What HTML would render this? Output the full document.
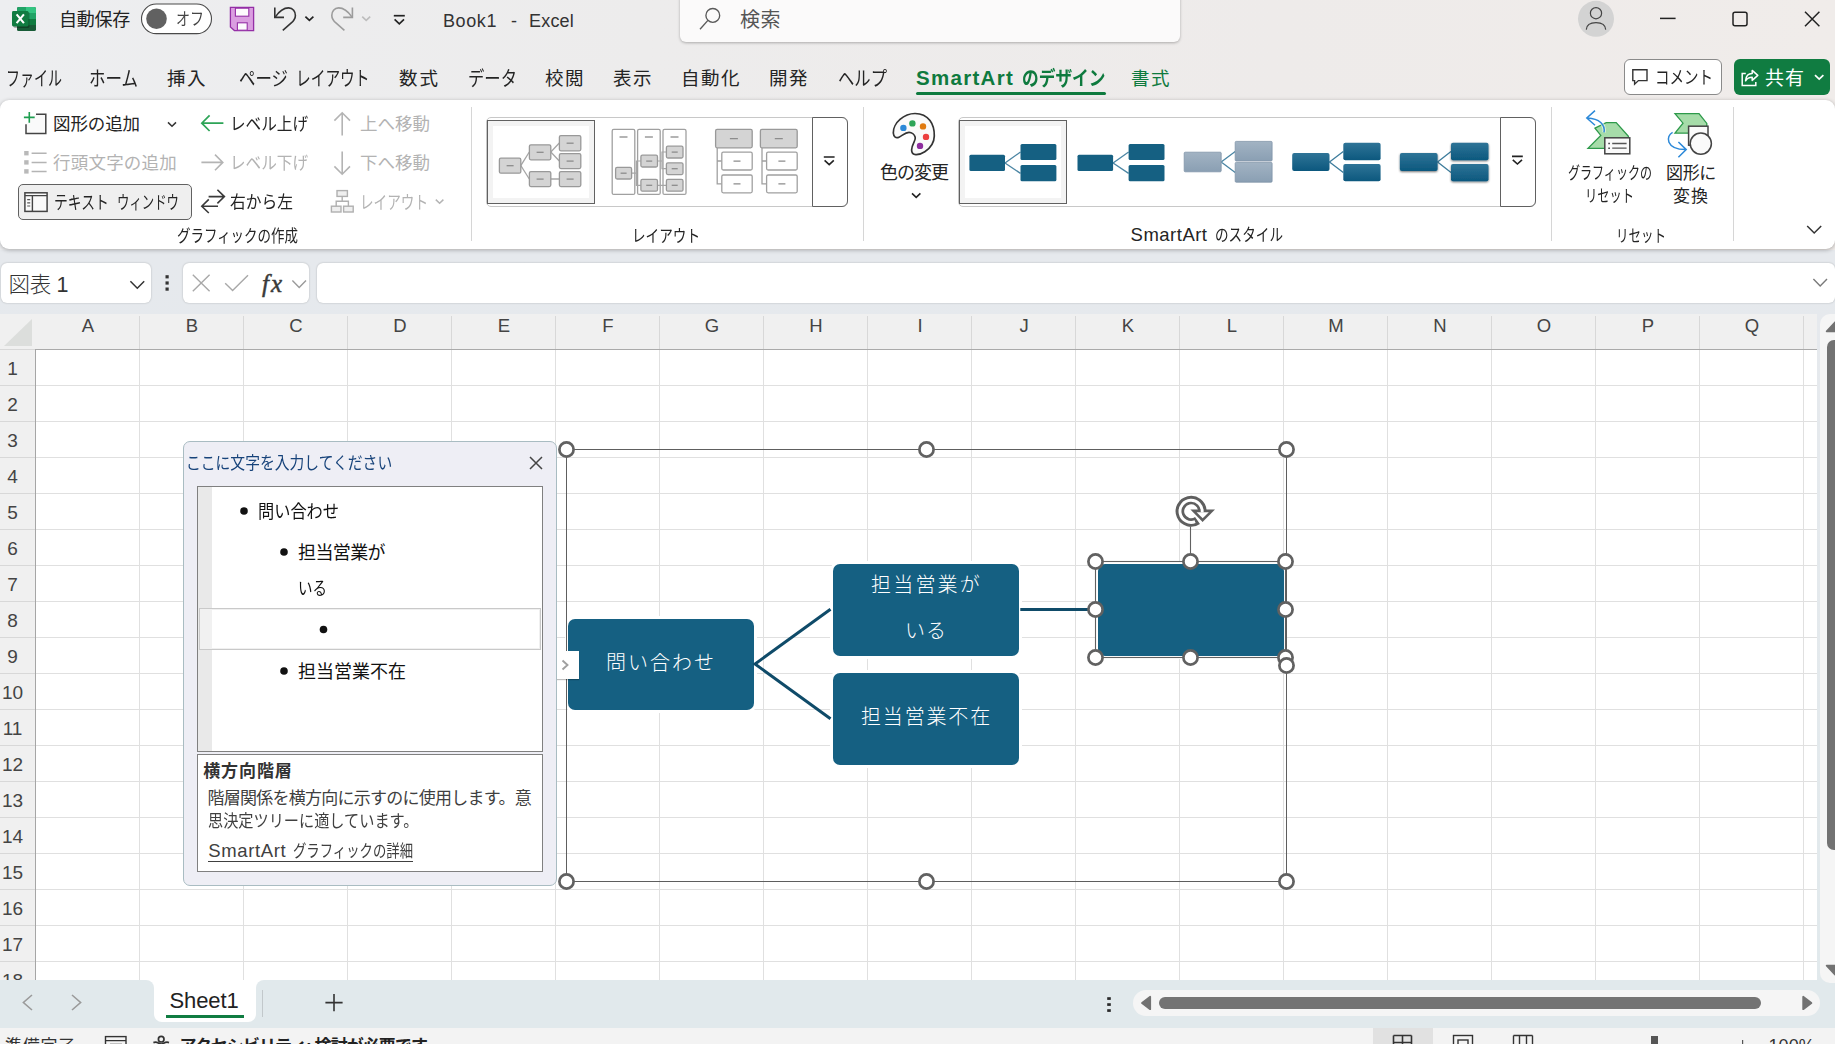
<!DOCTYPE html>
<html lang="ja"><head><meta charset="utf-8"><title>Book1 - Excel</title>
<style>

*{box-sizing:border-box;margin:0;padding:0}
html,body{width:1835px;height:1044px;overflow:hidden}
body{position:relative;background:linear-gradient(to right,#edeef0 0,#edecec 35%,#eeebea 70%,#f0ecea 100%);font-family:"Liberation Sans","Noto Sans CJK JP",sans-serif;}
.t{position:absolute;white-space:nowrap;}
.z{z-index:6}
.a{position:absolute}
svg{position:absolute;overflow:visible}
.sep{position:absolute;width:1px;background:#d6d6d6;top:107px;height:134px}
.hd{position:absolute;width:17px;height:17px;border-radius:50%;border:2.8px solid #666;background:#fff;}
.bx{position:absolute;background:#156082;border-radius:7px;box-shadow:0 0 0 3px #fff}

</style></head><body>

<!-- ===== title bar ===== -->
<div class="a" style="left:680px;top:-8px;width:500px;height:50px;background:#fbfafa;border-radius:6px;box-shadow:0 1px 3px rgba(0,0,0,.28)"></div>
<!-- ===== ribbon ===== -->
<div class="a" style="left:0;top:250px;width:1835px;height:800px;background:linear-gradient(#e6e9ed,#e1e9ec)"></div>
<div class="a" style="left:0;top:100px;width:1835px;height:149px;background:#fff;border-radius:9px;box-shadow:0 1px 4px rgba(0,0,0,.30)"></div>
<div class="sep" style="left:471px"></div>
<div class="sep" style="left:863px"></div>
<div class="sep" style="left:1551px"></div>
<div class="sep" style="left:1733px"></div>
<!-- text window button -->
<div class="a" style="left:18px;top:184px;width:174px;height:36px;border:1px solid #616161;border-radius:5px;background:#efefef"></div>
<!-- layout gallery -->
<div class="a" style="left:486px;top:117px;width:362px;height:90px;border:1px solid #c8c8c8;border-radius:5px;background:#fff"></div>
<div class="a" style="left:812px;top:117px;width:36.4px;height:90px;border:1px solid #616161;border-radius:0 6px 6px 0;background:#fff"></div>
<div class="a" style="left:487px;top:120px;width:108px;height:84px;border:1px solid #616161;background:#f3f3f3"></div>
<!-- style gallery -->
<div class="a" style="left:958px;top:117px;width:578px;height:90px;border:1px solid #c8c8c8;border-radius:5px;background:#fff"></div>
<div class="a" style="left:1500px;top:117px;width:36px;height:90px;border:1px solid #616161;border-radius:0 6px 6px 0;background:#fff"></div>
<div class="a" style="left:959px;top:120px;width:108px;height:84px;border:1px solid #616161;background:#f3f3f3"></div>
<!-- comment / share -->
<div class="a" style="left:1624px;top:59.4px;width:98px;height:35.4px;border:1px solid #8a8a8a;border-radius:6px;background:#fff"></div>
<div class="a" style="left:1734px;top:59.4px;width:96px;height:35.4px;border-radius:6px;background:#107c41"></div>
<!-- tab underline -->
<div class="a" style="left:916px;top:92px;width:190px;height:3px;background:#0e7a3e;border-radius:1.5px"></div>
<!-- ===== formula bar ===== -->
<div class="a" style="left:1px;top:263px;width:150px;height:40px;background:#fff;border-radius:6px;box-shadow:0 0 2px rgba(0,0,0,.25)"></div>
<div class="a" style="left:183px;top:263px;width:126px;height:40px;background:#fff;border-radius:6px;box-shadow:0 0 2px rgba(0,0,0,.25)"></div>
<div class="a" style="left:317px;top:263px;width:1518px;height:40px;background:#fff;border-radius:6px;box-shadow:0 0 2px rgba(0,0,0,.25)"></div>
<!-- ===== grid ===== -->
<div class="a" style="left:0;top:314px;width:1817px;height:666px;background:#fff"></div>
<div class="a" style="left:36px;top:349px;width:1781px;height:631px;background-image:linear-gradient(to right,transparent 103px,#e0e0e0 103px),linear-gradient(to bottom,transparent 35px,#e0e0e0 35px);background-size:104px 100%,100% 36px;background-position:0 0,0 1px"></div>
<div class="a" style="left:0;top:314px;width:1817px;height:36px;background:#f0f0f0;border-bottom:1px solid #aaa"></div>
<div class="a" style="left:0;top:349px;width:36px;height:631px;background:#f0f0f0;border-right:1px solid #a6a6a6"></div>
<div class="a" id="colsep" style="left:36px;top:316px;width:1781px;height:33px;background-image:linear-gradient(to right,transparent 103px,#d8d8d8 103px);background-size:104px 100%"></div>
<div class="a" id="rowsep" style="left:0;top:349px;width:35px;height:631px;background-image:linear-gradient(to bottom,transparent 35px,#d8d8d8 35px);background-size:100% 36px;background-position:0 1px"></div>
<svg style="left:0;top:314px" width="36" height="35"><polygon points="4,32 32,32 32,5" fill="#dcdedc"/></svg>
<!-- vertical scrollbar -->
<div class="a" style="left:1817.5px;top:314px;width:18px;height:670px;background:linear-gradient(#e6e9ed,#e1e9ec);z-index:6"></div>
<div class="a" style="left:1820px;top:314px;width:30px;height:669px;background:#f5f5f5;border-radius:10px;z-index:6"></div>
<div class="a" style="left:1827px;top:340px;width:14px;height:510px;background:#727272;border-radius:7px;z-index:6"></div>
<svg style="left:1817px;top:314px;z-index:6" width="18" height="670"><path d="M9.6 17.4L18 8.2V17.4Z" fill="#727272" stroke="#727272" stroke-width="1.6" stroke-linejoin="round"/><path d="M9.6 651.6H18V660.6Z" fill="#727272" stroke="#727272" stroke-width="1.6" stroke-linejoin="round"/></svg>
<!-- ===== sheet tab bar ===== -->
<div class="a" style="left:0;top:980px;width:1835px;height:64px;background:#fff;z-index:5"></div>
<div class="a" style="left:140px;top:1000px;width:130px;height:28px;background:#e1e9ec;z-index:5"></div>
<div class="a" style="left:0;top:980px;width:153.5px;height:48px;background:#e1e9ec;border-top-right-radius:8px;z-index:5"></div>
<div class="a" style="left:256px;top:980px;width:1579px;height:48px;background:#e1e9ec;border-top-left-radius:8px;z-index:5"></div>
<div class="a" style="left:153.5px;top:980px;width:102.5px;height:41.5px;background:#fff;border-radius:0 0 8px 8px;z-index:5"></div>
<div class="a" style="left:166px;top:1015px;width:78px;height:3px;background:#107c41;z-index:5"></div>
<div class="a" style="left:262px;top:990px;width:1px;height:27px;background:#c2c8cb;z-index:5"></div>
<div class="a" style="left:1132.8px;top:989.8px;width:687.2px;height:26.2px;background:#f5f5f5;border-radius:13.1px;z-index:5"></div>
<div class="a" style="left:1159px;top:997px;width:602.2px;height:12px;background:#737373;border-radius:6px;z-index:5"></div>
<svg style="left:0;top:981px;z-index:5" width="1835" height="46">
 <polyline points="32,14 23.4,21.5 32,29" fill="none" stroke="#9a9a9a" stroke-width="1.6"/>
 <polyline points="72,14 80.6,21.5 72,29" fill="none" stroke="#9a9a9a" stroke-width="1.6"/>
 <path d="M325.4 21.6h17.2M334 13v17.2" stroke="#333" stroke-width="1.6"/>
 <g fill="#2a2a2a"><rect x="1107.2" y="16.2" width="3.6" height="2.7"/><rect x="1107.2" y="22.2" width="3.6" height="2.7"/><rect x="1107.2" y="28.2" width="3.6" height="2.7"/></g>
 <path d="M1142 22L1150.2 15.8V28.2Z" fill="#727272" stroke="#727272" stroke-width="1.8" stroke-linejoin="round"/>
 <path d="M1811.4 22L1803.2 15.8V28.2Z" fill="#727272" stroke="#727272" stroke-width="1.8" stroke-linejoin="round"/>
</svg>
<!-- ===== status bar ===== -->
<div class="a" style="left:0;top:1028px;width:1835px;height:17px;background:#f3f3f3;z-index:5"></div>
<div class="a" style="left:1373px;top:1028px;width:60px;height:17px;background:#e1e1e1;z-index:5"></div>


<!-- ===== title bar icons ===== -->
<svg style="left:0;top:0" width="1835" height="100">
 <!-- excel logo -->
 <g>
  <rect x="17" y="7" width="19" height="24" rx="1.6" fill="#185c37"/>
  <path d="M18.6 7H26V13H17V8.6A1.6 1.6 0 0 1 18.6 7Z" fill="#21a366"/>
  <path d="M26 7H34.4A1.6 1.6 0 0 1 36 8.6V13H26Z" fill="#33c481"/>
  <rect x="17" y="13" width="9" height="6" fill="#107c41"/>
  <rect x="26" y="13" width="10" height="6" fill="#21a366"/>
  <rect x="17" y="19" width="9" height="6" fill="#185c37"/>
  <rect x="26" y="19" width="10" height="6" fill="#107c41"/>
  <rect x="13.5" y="12" width="16" height="16" rx="1.4" fill="#000" opacity=".28"/>
  <rect x="12" y="11" width="16.5" height="15.5" rx="1.4" fill="#107c41"/>
  <path d="M16.6 14.4L23.9 23.2M23.9 14.4L16.6 23.2" stroke="#fff" stroke-width="2.1" fill="none"/>
 </g>
 <!-- autosave toggle -->
 <rect x="141.5" y="4" width="70" height="29.6" rx="14.8" fill="#fff" stroke="#4a4a4a" stroke-width="1.1"/>
 <circle cx="156.5" cy="18.7" r="10.3" fill="#616161"/>
 <!-- save -->
 <path d="M230.4 7.4H253.6V30.6H234.4L230.4 27Z" fill="#da9ee0" stroke="#952fa6" stroke-width="1.3" stroke-linejoin="miter"/>
 <rect x="235.4" y="8.2" width="13.4" height="8" fill="#fdfafd" stroke="#952fa6" stroke-width="1.1"/>
 <rect x="237.4" y="22.8" width="9.8" height="7.4" fill="#fdfafd" stroke="#952fa6" stroke-width="1.1"/>
 <!-- undo -->
 <g fill="none" stroke="#333" stroke-width="1.6">
  <path d="M274.8 7.6V17.4H284"/>
  <path d="M275.2 17.1C279 11.5 284 7.9 288.6 7.9C293 7.9 295.4 11.5 295.4 15.4C295.4 19 293.5 21 291 23.2L282.8 30.4"/>
  <path d="M305.4 16.6L309.4 20.4L313.4 16.6" stroke="#222" stroke-width="1.7"/>
 </g>
 <!-- redo -->
 <g fill="none" stroke="#9c9c9c" stroke-width="1.6">
  <path d="M352.4 7.6V17.4H343.2"/>
  <path d="M352 17.1C348.2 11.5 343.2 7.9 338.6 7.9C334.2 7.9 331.8 11.5 331.8 15.4C331.8 19 333.7 21 336.2 23.2L344.4 30.4"/>
  <path d="M362.2 16.6L366.2 20.4L370.2 16.6" stroke="#bdbdbd" stroke-width="1.6"/>
 </g>
 <!-- customize QAT -->
 <g fill="none" stroke="#222" stroke-width="1.7">
  <path d="M393.8 15.7H404.8"/><path d="M394.6 19.4L399.3 23.8L404 19.4"/>
 </g>
 <!-- search icon -->
 <g fill="none" stroke="#5a5a5a" stroke-width="1.35">
  <circle cx="712.8" cy="15.4" r="6.9"/><path d="M707.9 20.4L700 29.2"/>
 </g>
 <!-- avatar -->
 <circle cx="1596" cy="18.8" r="18" fill="#d3d3d3"/>
 <g fill="none" stroke="#444" stroke-width="1.2">
  <circle cx="1596" cy="13.2" r="5.6"/>
  <path d="M1586.3 29.6C1586.6 24.6 1590.8 22.6 1596 22.6C1601.2 22.6 1605.4 24.6 1605.7 29.6"/>
 </g>
 <!-- window controls -->
 <g fill="none" stroke="#222" stroke-width="1.5">
  <path d="M1660 18.4H1675.6"/>
  <rect x="1733" y="12.2" width="14" height="13.6" rx="2"/>
  <path d="M1805 11.8L1819.4 26.2M1819.4 11.8L1805 26.2"/>
 </g>
 <!-- comment icon -->
 <path d="M1632.8 69.8H1647V80.6H1638.4L1634.6 84.2V80.6H1632.8Z" fill="none" stroke="#333" stroke-width="1.4" stroke-linejoin="miter"/>
 <!-- share icon -->
 <g fill="none" stroke="#fff" stroke-width="1.5">
  <path d="M1745.8 73.4H1742.2V85.6H1755.8V82"/>
  <path d="M1745.6 80.8C1745.9 76 1748.6 73.6 1752.2 73.6V70.4L1757.8 75.4L1752.2 80.4V77.2C1749.6 77.2 1747.2 78 1745.6 80.8Z" stroke-linejoin="round"/>
  <path d="M1815 75.2L1819.2 79.2L1823.4 75.2" stroke-width="1.7"/>
 </g>
</svg>
<!-- ===== ribbon group 1 icons ===== -->
<svg style="left:0;top:100px" width="480" height="150" viewBox="0 100 480 150">
 <!-- add shape -->
 <path d="M36 114.2H45.8V133.6H26V124.2" fill="#fafafa" stroke="#444" stroke-width="1.5"/>
 <path d="M23.9 117.4H34.7M29.3 112V122.8" stroke="#1e9e50" stroke-width="1.6" fill="none"/>
 <path d="M168 122.4L172 126.2L176 122.4" fill="none" stroke="#333" stroke-width="1.5"/>
 <!-- promote (green left arrow) -->
 <path d="M223.4 123.2H202M209.6 115.4L201.8 123.2L209.6 131" fill="none" stroke="#2da457" stroke-width="1.7"/>
 <!-- up arrow gray -->
 <path d="M342.2 135.6V113M334.4 120.6L342.2 112.8L350 120.6" fill="none" stroke="#b4b4b4" stroke-width="1.6"/>
 <!-- bullets gray -->
 <g fill="#b9b9b9"><rect x="24.2" y="151" width="4.4" height="4.4"/><rect x="24.2" y="160.2" width="4.4" height="4.4"/><rect x="24.2" y="169.2" width="4.4" height="4.4"/></g>
 <path d="M31.6 153.2H46.6M31.6 162.4H46.6M31.6 171.4H46.6" stroke="#b4b4b4" stroke-width="1.5" fill="none"/>
 <!-- demote gray right arrow -->
 <path d="M201.4 162.4H222.6M215 154.6L222.8 162.4L215 170.2" fill="none" stroke="#b4b4b4" stroke-width="1.6"/>
 <!-- down arrow gray -->
 <path d="M342.2 151.4V174M334.4 166.4L342.2 174.2L350 166.4" fill="none" stroke="#b4b4b4" stroke-width="1.6"/>
 <!-- text pane icon -->
 <rect x="24.9" y="192.8" width="22.2" height="18.6" fill="#fafafa" stroke="#444" stroke-width="1.5"/>
 <path d="M24.9 195.6H47.1M32.4 195.6V211.4" stroke="#444" stroke-width="1.4" fill="none"/>
 <path d="M27.2 199.6H30.2M27.2 202.8H30.2M27.2 206H30.2" stroke="#555" stroke-width="1.2" fill="none"/>
 <!-- right to left -->
 <g fill="none" stroke="#3a3a3a" stroke-width="1.6">
  <path d="M208.6 196.6H224.2M217.4 189.8L224.4 196.6L217.4 203.4"/>
  <path d="M218 206.2H202M208.8 199.4L201.8 206.2L208.8 213"/>
 </g>
 <!-- layout icon gray -->
 <g fill="#efefef" stroke="#b0b0b0" stroke-width="1.4">
  <rect x="337" y="190.6" width="10.4" height="5.8"/>
  <rect x="331.4" y="206.2" width="9.6" height="5.8"/>
  <rect x="343.6" y="206.2" width="9.6" height="5.8"/>
  <path d="M342.2 196.4V201.2M336.2 206.2V201.2H348.4V206.2" fill="none"/>
 </g>
 <path d="M435.8 199.6L439.6 203.2L443.4 199.6" fill="none" stroke="#b4b4b4" stroke-width="1.5"/>
</svg>


<!-- gallery inner white of selected items -->
<div class="a" style="left:493px;top:126px;width:96px;height:72px;background:#fff"></div>
<div class="a" style="left:965px;top:126px;width:96px;height:72px;background:#fff"></div>
<svg style="left:480px;top:100px" width="1355" height="150" viewBox="480 100 1355 150">
<g fill="none" stroke="#a6a6a6" stroke-width="1.3"><path d="M529.3 152L520.8 165.6L529.3 179M559.3 143L550.8 152L559.3 161M550.8 179H559.3"/></g>
<g fill="#d4d4d4" stroke="#999" stroke-width="1.3">
<rect x="499.4" y="158.2" width="21.4" height="15" rx="1.5"/>
<rect x="529.4" y="144.8" width="21.4" height="15" rx="1.5"/>
<rect x="529.4" y="171.6" width="21.4" height="15" rx="1.5"/>
<rect x="559.4" y="135.6" width="21.4" height="15.2" rx="1.5"/>
<rect x="559.4" y="153.6" width="21.4" height="15" rx="1.5"/>
<rect x="559.4" y="171.6" width="21.4" height="15" rx="1.5"/>
</g>
<g stroke="#8c8c8c" stroke-width="1.3">
<path d="M506.6 165.7H513.6"/>
<path d="M536.6 152.3H543.6"/>
<path d="M536.6 179.1H543.6"/>
<path d="M566.6 143.2H573.6"/>
<path d="M566.6 161.1H573.6"/>
<path d="M566.6 179.1H573.6"/>
</g>
<g fill="#fff" stroke="#a0a0a0" stroke-width="1.3">
<rect x="612.2" y="129.4" width="22.6" height="65" rx="1.5"/>
<rect x="637.6" y="129.4" width="22.6" height="65" rx="1.5"/>
<rect x="663" y="129.4" width="23.0" height="65" rx="1.5"/>
</g>
<g fill="none" stroke="#a6a6a6" stroke-width="1.2"><path d="M631.6 173.2H636.4V161H640.9M636.4 173.2V185.3H640.9M657.5 161H662V152H666.4M662 161V168.7H666.4M657.5 185.3H666.4"/></g>
<g fill="#d4d4d4" stroke="#999" stroke-width="1.3">
<rect x="615.6" y="167.4" width="16" height="11.6" rx="1.5"/>
<rect x="640.9" y="155.2" width="16.6" height="11.8" rx="1.5"/>
<rect x="640.9" y="179.4" width="16.6" height="11.8" rx="1.5"/>
<rect x="666.4" y="146.2" width="16.6" height="11.8" rx="1.5"/>
<rect x="666.4" y="162.8" width="16.6" height="11.8" rx="1.5"/>
<rect x="666.4" y="179.4" width="16.6" height="11.8" rx="1.5"/>
</g><g stroke="#8c8c8c" stroke-width="1.3">
<path d="M620.6 173.2H626.6"/>
<path d="M646.2 161.1H652.2"/>
<path d="M646.2 185.3H652.2"/>
<path d="M671.7 152.1H677.7"/>
<path d="M671.7 168.7H677.7"/>
<path d="M671.7 185.3H677.7"/>
<path d="M619.5 137H627.5"/>
<path d="M644.9 137H652.9"/>
<path d="M670.5 137H678.5"/>
</g>
<path d="M717.2 147.9V183.8H721.8M717.2 161H721.8" fill="none" stroke="#a0a0a0" stroke-width="1.3"/>
<rect x="715.6" y="129.4" width="36.6" height="18.4" rx="1.5" fill="#d4d4d4" stroke="#999" stroke-width="1.3"/>
<rect x="721.8" y="152.2" width="30.4" height="17.8" rx="1.5" fill="#fff" stroke="#a0a0a0" stroke-width="1.3"/>
<rect x="721.8" y="175" width="30.4" height="17.8" rx="1.5" fill="#fff" stroke="#a0a0a0" stroke-width="1.3"/>
<path d="M729.9 138.6H737.9M733.5 161.1H740.5M733.5 183.9H740.5" stroke="#8c8c8c" stroke-width="1.3"/>
<path d="M762 147.9V183.8H766.6M762 161H766.6" fill="none" stroke="#a0a0a0" stroke-width="1.3"/>
<rect x="760.4" y="129.4" width="36.8" height="18.4" rx="1.5" fill="#d4d4d4" stroke="#999" stroke-width="1.3"/>
<rect x="766.6" y="152.2" width="30.6" height="17.8" rx="1.5" fill="#fff" stroke="#a0a0a0" stroke-width="1.3"/>
<rect x="766.6" y="175" width="30.6" height="17.8" rx="1.5" fill="#fff" stroke="#a0a0a0" stroke-width="1.3"/>
<path d="M774.8 138.6H782.8M778.4 161.1H785.4M778.4 183.9H785.4" stroke="#8c8c8c" stroke-width="1.3"/><defs><linearGradient id="g3" x1="0" y1="0" x2="0" y2="1"><stop offset="0" stop-color="#a2b3c3"/><stop offset="1" stop-color="#8a9fb3"/></linearGradient><linearGradient id="g4" x1="0" y1="0" x2="0" y2="1"><stop offset="0" stop-color="#2f7497"/><stop offset="1" stop-color="#0c587e"/></linearGradient><filter id="sh" x="-20%" y="-20%" width="140%" height="160%"><feGaussianBlur in="SourceAlpha" stdDeviation="1"/><feOffset dy="1.2"/><feComponentTransfer><feFuncA type="linear" slope=".55"/></feComponentTransfer><feMerge><feMergeNode/><feMergeNode in="SourceGraphic"/></feMerge></filter></defs>
<path d="M1020.5 152L1005.0 163L1020.5 173.4" fill="none" stroke="#4c86a4" stroke-width="1.3"/>
<g fill="#156082"><rect x="969.4" y="154.7" width="35.6" height="16.2" rx="1.5"/><rect x="1020.5" y="143.9" width="35.9" height="16" rx="1.5"/><rect x="1020.5" y="165.1" width="35.9" height="16.1" rx="1.5"/></g>
<path d="M1128.6 152L1113.1 163L1128.6 173.4" fill="none" stroke="#4c86a4" stroke-width="1.3"/>
<g fill="#156082"><rect x="1077.5" y="154.7" width="35.6" height="16.2" rx="1.5"/><rect x="1128.6" y="143.9" width="35.9" height="16" rx="1.5"/><rect x="1128.6" y="165.1" width="35.9" height="16.1" rx="1.5"/></g>
<path d="M1235.2 151.4L1221.2 162L1235.2 172.4" fill="none" stroke="#4c86a4" stroke-width="1.3"/>
<g fill="url(#g3)" stroke="#8094a8" stroke-width=".8"><rect x="1184.2" y="152.2" width="37" height="19.6" rx="1"/><rect x="1235.2" y="141.4" width="36.9" height="19.6" rx="1"/><rect x="1235.2" y="162.4" width="36.9" height="19.8" rx="1"/></g>
<path d="M1343.3 151.6L1329.5 162L1343.3 172.6" fill="none" stroke="#3d7c9c" stroke-width="1.3"/>
<g fill="url(#g4)"><rect x="1292.2" y="153" width="37.3" height="17.9" rx="2"/><rect x="1343.3" y="142.7" width="37.3" height="17.6" rx="2"/><rect x="1343.3" y="164" width="37.3" height="17.2" rx="2"/></g>
<path d="M1451 151.6L1437.6 162L1451 172.6" fill="none" stroke="#3d7c9c" stroke-width="1.3"/>
<g fill="url(#g4)" filter="url(#sh)"><rect x="1399.9" y="153" width="37.7" height="17.9" rx="2"/><rect x="1451" y="142.7" width="37.5" height="17.6" rx="2"/><rect x="1451" y="164" width="37.5" height="17.2" rx="2"/></g>
 <!-- gallery expand icons -->
 <g fill="none" stroke="#222" stroke-width="1.6">
  <path d="M823.8 157H834.6M824.6 160.4L829.2 164.6L833.8 160.4"/>
  <path d="M1512 156.4H1522.8M1512.8 159.8L1517.4 164L1522 159.8"/>
 </g>
 <!-- palette -->
 <path d="M893.3 133C893 128.5 896 122.8 900 119.4C904.5 115.5 910 113.5 915 113.5C921 113.5 926.5 116 930 120.6C933 124.6 934.4 130 934.3 136C934.2 142 930.5 148 924.8 151.8C921.5 154 918.5 154.7 915.8 154.6C913 154.5 911.6 152.6 911.6 150C911.6 147.5 912.6 145 913.8 142.6C915 140.2 915.7 139 915.2 137.2C914.5 134.8 912 132.4 909 132.4C905 132.4 902.5 135.6 899 137.2C896 138.6 893.6 137 893.3 133Z" fill="#fafafa" stroke="#333" stroke-width="1.7"/>
 <circle cx="903.4" cy="127.9" r="3.2" fill="#2b88d8"/><circle cx="912.4" cy="123.4" r="3.2" fill="#2da457"/><circle cx="923" cy="126.4" r="3.2" fill="#e07a10"/><circle cx="926" cy="136.9" r="3.2" fill="#ec3f3f"/><circle cx="920" cy="145.9" r="3.2" fill="#8e2c9e"/>
 <path d="M912 193.4L916.2 197.4L920.4 193.4" fill="none" stroke="#222" stroke-width="1.6"/>
 <!-- reset graphic -->
 <path d="M1595 128.2L1606.2 122.6H1616.2L1628.4 136.2V148.4H1588L1600.8 135.4Z" fill="#a6dca9" stroke="#2e9a4b" stroke-width="1.3" stroke-linejoin="miter"/>
 <path d="M1604 132.4C1605.4 124.6 1599.4 118.6 1588 118" fill="none" stroke="#fff" stroke-width="3.6" opacity=".6"/>
 <path d="M1604 132.4C1605.4 124.6 1599.4 118.6 1587.4 118M1595 110.6L1586.8 118L1595 125.2" fill="none" stroke="#2b88d8" stroke-width="1.5"/>
 <rect x="1604.8" y="137.8" width="25" height="16" fill="#fafafa" stroke="#444" stroke-width="1.5"/>
 <path d="M1612.2 143.5H1626.6M1612.2 148.2H1626.6" stroke="#555" stroke-width="1.3"/>
 <path d="M1608.2 143.5H1610M1608.2 148.2H1610" stroke="#555" stroke-width="1.4"/>
 <!-- convert to shapes -->
 <path d="M1675 113.6H1699L1706.8 123.4V133.2H1675L1683 123.2Z" fill="#a6dca9" stroke="#2e9a4b" stroke-width="1.3"/>
 <rect x="1688.6" y="126.2" width="19.4" height="19" fill="#fafafa" stroke="#444" stroke-width="1.5"/>
 <circle cx="1700.8" cy="143.6" r="10.6" fill="#fafafa" stroke="#444" stroke-width="1.5"/>
 <path d="M1672.6 132.4C1665.6 136 1665.6 149.4 1685.4 149.6M1678.4 142L1686.2 149.6L1678.4 157.2" fill="none" stroke="#2b88d8" stroke-width="1.5"/>
 <!-- collapse ribbon chevron -->
 <path d="M1807.2 226L1814.2 233L1821.2 226" fill="none" stroke="#333" stroke-width="1.5"/>
</svg>
<!-- ===== formula bar icons ===== -->
<svg style="left:0;top:250px" width="1835" height="64" viewBox="0 250 1835 64">
 <path d="M130.4 281.2L137.3 288.2L144.2 281.2" fill="none" stroke="#333" stroke-width="1.5"/>
 <g fill="#333"><rect x="165.5" y="275.2" width="3.2" height="3.2"/><rect x="165.5" y="281.4" width="3.2" height="3.2"/><rect x="165.5" y="287.5" width="3.2" height="3.2"/></g>
 <path d="M192.8 274.8L209.6 291.2M209.6 274.8L192.8 291.2" fill="none" stroke="#a8a8a8" stroke-width="1.4"/>
 <path d="M225.2 283.2L232.6 290.4L248 275.2" fill="none" stroke="#a8a8a8" stroke-width="1.4"/>
 <path d="M292.4 280.4L299.2 287.4L306 280.4" fill="none" stroke="#9a9a9a" stroke-width="1.4"/>
 <path d="M1813.4 279L1820.2 286L1827 279" fill="none" stroke="#7a7a7a" stroke-width="1.4"/>
</svg>
<!-- ===== status bar icons ===== -->
<svg style="left:0;top:1027px;z-index:6" width="1835" height="17" viewBox="0 1027 1835 17">
 <g fill="none" stroke="#333" stroke-width="1.4">
  <rect x="105.5" y="1036.6" width="20.5" height="14"/><path d="M105.5 1040.6H126M110 1044.5H122"/>
  <circle cx="161.2" cy="1039.2" r="2.8" stroke-width="1.7"/><path d="M153.4 1042.6C157 1041 159 1044 161.2 1044C163.4 1044 165.4 1041 169 1042.6" stroke-width="1.7"/>
  <path d="M1393.5 1035.5V1050M1402.5 1035.5V1050M1411.5 1035.5V1050M1393.5 1035.5H1411.5M1393.5 1042.5H1411.5" stroke-width="1.6"/>
  <rect x="1453.5" y="1035.5" width="19" height="16"/><rect x="1458" y="1040" width="10" height="10"/>
  <path d="M1513.5 1035.5V1050M1519.5 1035.5V1050M1526.5 1035.5V1050M1532.5 1035.5V1050M1513.5 1035.5H1532.5"/>
 </g>
 <rect x="1651" y="1036" width="7" height="10" fill="#555"/>
 <path d="M1742.6 1040V1046" stroke="#555" stroke-width="1.2"/>
</svg>


<!-- ===== SmartArt ===== -->
<div class="bx" style="left:568px;top:619px;width:186px;height:91px"></div>
<div class="bx" style="left:833px;top:564px;width:186px;height:92px"></div>
<div class="bx" style="left:833px;top:673px;width:186px;height:92px"></div>
<div class="bx" style="left:1098px;top:564px;width:186px;height:92px"></div>
<div class="a" style="left:566px;top:449px;width:721px;height:433px;border:1px solid #5e5e5e"></div>
<svg style="left:0;top:0" width="1835" height="1044">
 <g stroke="#0f4b69" stroke-width="3" fill="none" stroke-linecap="butt">
  <path d="M830.5 609.3L755 664L830.5 718.7"/>
  <path d="M1020.3 609.5H1092"/>
 </g>
 <rect x="1095.5" y="561.5" width="190" height="96" fill="none" stroke="#616161" stroke-width="1.1"/>
 <path d="M1190.5 553V526.5" stroke="#616161" stroke-width="1.1"/>
 <!-- rotate handle -->
 <g fill="none" stroke-linecap="butt">
  <path d="M1197.52 520.47A11.2 11.2 0 1 1 1202.29 510.91" stroke="#5f5f5f" stroke-width="8.6"/>
  <path d="M1190.4 509.6H1215L1202.6 521.9Z" fill="#5f5f5f"/>
  <path d="M1195.08 521.66A11.1 11.1 0 1 1 1202.14 512.46" stroke="#fff" stroke-width="2.9"/>
  <path d="M1196.6 512.2H1208.8L1202.7 518.3Z" fill="#fff"/>
 </g>
</svg>
<!-- expand tab -->
<div class="a" style="left:557px;top:651px;width:22px;height:28px;background:#fff;box-shadow:0 1px 1px rgba(0,0,0,.25)"></div>
<svg style="left:557px;top:651px" width="22" height="28"><polyline points="5.5,9.5 10.5,14 5.5,18.5" fill="none" stroke="#a0a0a0" stroke-width="1.9"/></svg>
<svg style="left:0;top:0" width="1835" height="1044"><g fill="#fff" stroke="#616161" stroke-width="2.7"><circle cx="1095.5" cy="561.5" r="7.1"/><circle cx="1190.5" cy="561.5" r="7.1"/><circle cx="1285.5" cy="561.5" r="7.1"/><circle cx="1095.5" cy="609.5" r="7.1"/><circle cx="1285.5" cy="609.5" r="7.1"/><circle cx="1095.5" cy="657.5" r="7.1"/><circle cx="1190.5" cy="657.5" r="7.1"/><circle cx="1285.5" cy="657.5" r="7.1"/><circle cx="566.5" cy="449.5" r="7.1"/><circle cx="926.5" cy="449.5" r="7.1"/><circle cx="1286.5" cy="449.5" r="7.1"/><circle cx="566.5" cy="881.5" r="7.1"/><circle cx="926.5" cy="881.5" r="7.1"/><circle cx="1286.5" cy="881.5" r="7.1"/><circle cx="1286.5" cy="665.5" r="7.1"/></g></svg>

<!-- ===== text pane ===== -->
<div class="a" style="left:183px;top:441px;width:374px;height:445px;background:#eeeef5;border:1px solid #a9bcc2;border-radius:7px"></div>
<svg style="left:529px;top:456px" width="14" height="14"><path d="M1 1L13 13M13 1L1 13" stroke="#444" stroke-width="1.5"/></svg>
<div class="a" style="left:197px;top:486px;width:346px;height:266px;background:#fff;border:1px solid #808080"></div>
<div class="a" style="left:198px;top:487px;width:14px;height:264px;background:#e9e9e9"></div>
<div class="a" style="left:199px;top:608px;width:342px;height:41.5px;background:#fff;border:1px solid #c9c9c9;box-shadow:inset 0 0 0 1px #f0f0f0"></div>
<div class="a" style="left:200px;top:609px;width:11.5px;height:39.5px;background:#f1f1f1"></div>
<div class="a" style="left:197px;top:754px;width:346px;height:118px;background:#fff;border:1px solid #808080"></div>
<div class="a" style="left:208px;top:860.5px;width:204.5px;height:1.1px;background:#404040"></div>
<svg style="left:0;top:0" width="600" height="900"><g fill="#111">
 <circle cx="244" cy="511" r="3.8"/><circle cx="284" cy="552" r="3.8"/><circle cx="323.5" cy="629.5" r="3.8"/><circle cx="284" cy="671" r="3.8"/></g></svg>

<div class="t" style="left:59px;top:7.0px;font-size:18px;line-height:26px;color:#222;letter-spacing:-0.25px;">自動保存</div>
<div class="t" style="left:175.5px;top:7.2px;font-size:17.5px;line-height:25.5px;color:#444;transform:scaleX(0.8000);transform-origin:0 50%;">オフ</div>
<div class="t" style="left:443px;top:8.0px;font-size:18px;line-height:26px;color:#333;letter-spacing:0.59px;">Book1</div>
<div class="t" style="left:511px;top:8.0px;font-size:18px;line-height:26px;color:#333;letter-spacing:0.00px;">-</div>
<div class="t" style="left:529px;top:8.0px;font-size:18px;line-height:26px;color:#333;letter-spacing:0.20px;">Excel</div>
<div class="t" style="left:740px;top:6.0px;font-size:20px;line-height:28px;color:#555;letter-spacing:0.50px;">検索</div>
<div class="t" style="left:6px;top:65.0px;font-size:20px;line-height:28px;color:#242424;transform:scaleX(0.7000);transform-origin:0 50%;">ファイル</div>
<div class="t" style="left:89px;top:65.0px;font-size:20px;line-height:28px;color:#242424;transform:scaleX(0.8248);transform-origin:0 50%;">ホーム</div>
<div class="t" style="left:167px;top:65.8px;font-size:18.5px;line-height:26.5px;color:#242424;letter-spacing:1.49px;">挿入</div>
<div class="t" style="left:239px;top:65.0px;font-size:20px;line-height:28px;color:#242424;transform:scaleX(0.8220);transform-origin:0 50%;">ページ</div>
<div class="t" style="left:296px;top:65.0px;font-size:20px;line-height:28px;color:#242424;transform:scaleX(0.7350);transform-origin:0 50%;">レイアウト</div>
<div class="t" style="left:399px;top:65.8px;font-size:18.5px;line-height:26.5px;color:#242424;letter-spacing:1.99px;">数式</div>
<div class="t" style="left:468px;top:65.0px;font-size:20px;line-height:28px;color:#242424;transform:scaleX(0.8167);transform-origin:0 50%;">データ</div>
<div class="t" style="left:545px;top:65.8px;font-size:18.5px;line-height:26.5px;color:#242424;letter-spacing:1.49px;">校閲</div>
<div class="t" style="left:613px;top:65.8px;font-size:18.5px;line-height:26.5px;color:#242424;letter-spacing:1.49px;">表示</div>
<div class="t" style="left:681px;top:65.8px;font-size:18.5px;line-height:26.5px;color:#242424;letter-spacing:1.49px;">自動化</div>
<div class="t" style="left:769px;top:65.8px;font-size:18.5px;line-height:26.5px;color:#242424;letter-spacing:1.49px;">開発</div>
<div class="t" style="left:838px;top:65.0px;font-size:20px;line-height:28px;color:#242424;transform:scaleX(0.8167);transform-origin:0 50%;">ヘルプ</div>
<div class="t" style="left:916px;top:63.8px;font-size:20.5px;line-height:28.5px;color:#0e7a3e;font-weight:700;letter-spacing:1.29px;">SmartArt</div>
<div class="t" style="left:1021.5px;top:64.5px;font-size:20px;line-height:28px;color:#0e7a3e;font-weight:700;transform:scaleX(0.8350);transform-origin:0 50%;">のデザイン</div>
<div class="t" style="left:1131px;top:65.8px;font-size:18.5px;line-height:26.5px;color:#0e7a3e;letter-spacing:1.49px;">書式</div>
<div class="t" style="left:1655px;top:65.0px;font-size:18px;line-height:26px;color:#242424;transform:scaleX(0.8056);transform-origin:0 50%;">コメント</div>
<div class="t" style="left:1765px;top:64.5px;font-size:19px;line-height:27px;color:#fff;letter-spacing:0.99px;">共有</div>
<div class="t" style="left:53px;top:112.2px;font-size:17.5px;line-height:25.5px;color:#242424;letter-spacing:-0.10px;">図形の追加</div>
<div class="t" style="left:230px;top:112.2px;font-size:17.5px;line-height:25.5px;color:#242424;transform:scaleX(0.8914);transform-origin:0 50%;">レベル上げ</div>
<div class="t" style="left:360px;top:112.2px;font-size:17.5px;line-height:25.5px;color:#b3b3b3;letter-spacing:0.00px;">上へ移動</div>
<div class="t" style="left:53px;top:151.2px;font-size:17.5px;line-height:25.5px;color:#b3b3b3;letter-spacing:0.21px;">行頭文字の追加</div>
<div class="t" style="left:230px;top:151.2px;font-size:17.5px;line-height:25.5px;color:#b3b3b3;transform:scaleX(0.8914);transform-origin:0 50%;">レベル下げ</div>
<div class="t" style="left:360px;top:151.2px;font-size:17.5px;line-height:25.5px;color:#b3b3b3;letter-spacing:0.00px;">下へ移動</div>
<div class="t" style="left:54px;top:190.0px;font-size:18px;line-height:26px;color:#242424;transform:scaleX(0.7654);transform-origin:0 50%;">テキスト</div>
<div class="t" style="left:116.5px;top:190.0px;font-size:18px;line-height:26px;color:#242424;transform:scaleX(0.6889);transform-origin:0 50%;">ウィンドウ</div>
<div class="t" style="left:230px;top:190.2px;font-size:17.5px;line-height:25.5px;color:#242424;transform:scaleX(0.9000);transform-origin:0 50%;">右から左</div>
<div class="t" style="left:360px;top:190.0px;font-size:18px;line-height:26px;color:#b3b3b3;transform:scaleX(0.7556);transform-origin:0 50%;">レイアウト</div>
<div class="t" style="left:177px;top:223.5px;font-size:17px;line-height:25px;color:#242424;transform:scaleX(0.7925);transform-origin:0 50%;">グラフィックの作成</div>
<div class="t" style="left:632px;top:223.5px;font-size:17px;line-height:25px;color:#242424;transform:scaleX(0.8000);transform-origin:0 50%;">レイアウト</div>
<div class="t" style="left:880px;top:160.0px;font-size:18px;line-height:26px;color:#242424;letter-spacing:-1.00px;">色の変更</div>
<div class="t" style="left:1130.6px;top:222.2px;font-size:18.5px;line-height:26.5px;color:#242424;letter-spacing:0.49px;">SmartArt</div>
<div class="t" style="left:1214.5px;top:223.0px;font-size:17px;line-height:25px;color:#242424;transform:scaleX(0.8000);transform-origin:0 50%;">のスタイル</div>
<div class="t" style="left:1568px;top:160.5px;font-size:17px;line-height:25px;color:#242424;transform:scaleX(0.7078);transform-origin:0 50%;">グラフィックの</div>
<div class="t" style="left:1585px;top:183.5px;font-size:17px;line-height:25px;color:#242424;transform:scaleX(0.7206);transform-origin:0 50%;">リセット</div>
<div class="t" style="left:1666px;top:160.5px;font-size:17px;line-height:25px;color:#242424;letter-spacing:-0.33px;">図形に</div>
<div class="t" style="left:1673px;top:183.5px;font-size:17px;line-height:25px;color:#242424;letter-spacing:1.00px;">変換</div>
<div class="t" style="left:1616px;top:223.5px;font-size:17px;line-height:25px;color:#242424;transform:scaleX(0.7353);transform-origin:0 50%;">リセット</div>
<div class="t" style="left:8.5px;top:271.2px;font-size:21.5px;line-height:29.5px;color:#333;font-weight:300;letter-spacing:-0.36px;">図表 1</div>
<div class="t" style="left:262px;top:266.5px;font-size:25px;line-height:33px;color:#3a3a3a;font-family:'Liberation Serif',serif;font-style:italic;-webkit-text-stroke:0.5px #3a3a3a;letter-spacing:1.98px;">fx</div>
<div class="t" style="left:185.8px;top:450.5px;font-size:17px;line-height:25px;color:#17437a;transform:scaleX(0.8701);transform-origin:0 50%;">ここに文字を入力してください</div>
<div class="t" style="left:258px;top:499.0px;font-size:18px;line-height:26px;color:#111;transform:scaleX(0.9000);transform-origin:0 50%;">問い合わせ</div>
<div class="t" style="left:298px;top:540.0px;font-size:18px;line-height:26px;color:#111;letter-spacing:-0.60px;">担当営業が</div>
<div class="t" style="left:298px;top:576.0px;font-size:18px;line-height:26px;color:#111;transform:scaleX(0.8056);transform-origin:0 50%;">いる</div>
<div class="t" style="left:298px;top:659.0px;font-size:18px;line-height:26px;color:#111;letter-spacing:0.00px;">担当営業不在</div>
<div class="t" style="left:203.2px;top:759.2px;font-size:17px;line-height:25px;color:#333;font-weight:700;letter-spacing:0.92px;">横方向階層</div>
<div class="t" style="left:207.6px;top:786.1px;font-size:17px;line-height:25px;color:#404040;letter-spacing:-0.75px;">階層関係を横方向に示すのに使用します。意</div>
<div class="t" style="left:207.6px;top:809.2px;font-size:17px;line-height:25px;color:#404040;transform:scaleX(0.8923);transform-origin:0 50%;">思決定ツリーに適しています。</div>
<div class="t" style="left:208.3px;top:837.8px;font-size:18.5px;line-height:26.5px;color:#404040;letter-spacing:0.61px;">SmartArt</div>
<div class="t" style="left:292.5px;top:838.5px;font-size:17px;line-height:25px;color:#404040;transform:scaleX(0.7867);transform-origin:0 50%;">グラフィックの詳細</div>
<div class="t" style="left:606px;top:649.0px;font-size:20px;line-height:28px;color:#fff;font-weight:300;letter-spacing:2.00px;">問い合わせ</div>
<div class="t" style="left:871px;top:571.0px;font-size:20px;line-height:28px;color:#fff;font-weight:300;letter-spacing:2.20px;">担当営業が</div>
<div class="t" style="left:905px;top:617.0px;font-size:20px;line-height:28px;color:#fff;font-weight:300;letter-spacing:1.00px;">いる</div>
<div class="t" style="left:861px;top:703.0px;font-size:20px;line-height:28px;color:#fff;font-weight:300;letter-spacing:1.83px;">担当営業不在</div>
<div class="t z" style="left:169.5px;top:985.5px;font-size:22px;line-height:30px;color:#222;letter-spacing:-0.12px;">Sheet1</div>
<div class="t z" style="left:5px;top:1033.5px;font-size:17px;line-height:25px;color:#333;letter-spacing:0.75px;">準備完了</div>
<div class="t z" style="left:179.5px;top:1033.5px;font-size:17px;line-height:25px;color:#222;font-weight:700;letter-spacing:-0.94px;">アクセシビリティ: 検討が必要です</div>
<div class="t z" style="left:1768.4px;top:1032.5px;font-size:18px;line-height:26px;color:#333;letter-spacing:0.14px;">100%</div>
<div class="t" style="left:80px;top:312.8px;font-size:18.5px;line-height:26.5px;color:#444444;width:16px;text-align:center;">A</div>
<div class="t" style="left:184px;top:312.8px;font-size:18.5px;line-height:26.5px;color:#444444;width:16px;text-align:center;">B</div>
<div class="t" style="left:288px;top:312.8px;font-size:18.5px;line-height:26.5px;color:#444444;width:16px;text-align:center;">C</div>
<div class="t" style="left:392px;top:312.8px;font-size:18.5px;line-height:26.5px;color:#444444;width:16px;text-align:center;">D</div>
<div class="t" style="left:496px;top:312.8px;font-size:18.5px;line-height:26.5px;color:#444444;width:16px;text-align:center;">E</div>
<div class="t" style="left:600px;top:312.8px;font-size:18.5px;line-height:26.5px;color:#444444;width:16px;text-align:center;">F</div>
<div class="t" style="left:704px;top:312.8px;font-size:18.5px;line-height:26.5px;color:#444444;width:16px;text-align:center;">G</div>
<div class="t" style="left:808px;top:312.8px;font-size:18.5px;line-height:26.5px;color:#444444;width:16px;text-align:center;">H</div>
<div class="t" style="left:912px;top:312.8px;font-size:18.5px;line-height:26.5px;color:#444444;width:16px;text-align:center;">I</div>
<div class="t" style="left:1016px;top:312.8px;font-size:18.5px;line-height:26.5px;color:#444444;width:16px;text-align:center;">J</div>
<div class="t" style="left:1120px;top:312.8px;font-size:18.5px;line-height:26.5px;color:#444444;width:16px;text-align:center;">K</div>
<div class="t" style="left:1224px;top:312.8px;font-size:18.5px;line-height:26.5px;color:#444444;width:16px;text-align:center;">L</div>
<div class="t" style="left:1328px;top:312.8px;font-size:18.5px;line-height:26.5px;color:#444444;width:16px;text-align:center;">M</div>
<div class="t" style="left:1432px;top:312.8px;font-size:18.5px;line-height:26.5px;color:#444444;width:16px;text-align:center;">N</div>
<div class="t" style="left:1536px;top:312.8px;font-size:18.5px;line-height:26.5px;color:#444444;width:16px;text-align:center;">O</div>
<div class="t" style="left:1640px;top:312.8px;font-size:18.5px;line-height:26.5px;color:#444444;width:16px;text-align:center;">P</div>
<div class="t" style="left:1744px;top:312.8px;font-size:18.5px;line-height:26.5px;color:#444444;width:16px;text-align:center;">Q</div>
<div class="t" style="left:0.5px;top:354.5px;font-size:19px;line-height:27px;color:#444444;width:24px;text-align:center;">1</div>
<div class="t" style="left:0.5px;top:390.5px;font-size:19px;line-height:27px;color:#444444;width:24px;text-align:center;">2</div>
<div class="t" style="left:0.5px;top:426.5px;font-size:19px;line-height:27px;color:#444444;width:24px;text-align:center;">3</div>
<div class="t" style="left:0.5px;top:462.5px;font-size:19px;line-height:27px;color:#444444;width:24px;text-align:center;">4</div>
<div class="t" style="left:0.5px;top:498.5px;font-size:19px;line-height:27px;color:#444444;width:24px;text-align:center;">5</div>
<div class="t" style="left:0.5px;top:534.5px;font-size:19px;line-height:27px;color:#444444;width:24px;text-align:center;">6</div>
<div class="t" style="left:0.5px;top:570.5px;font-size:19px;line-height:27px;color:#444444;width:24px;text-align:center;">7</div>
<div class="t" style="left:0.5px;top:606.5px;font-size:19px;line-height:27px;color:#444444;width:24px;text-align:center;">8</div>
<div class="t" style="left:0.5px;top:642.5px;font-size:19px;line-height:27px;color:#444444;width:24px;text-align:center;">9</div>
<div class="t" style="left:0.5px;top:678.5px;font-size:19px;line-height:27px;color:#444444;width:24px;text-align:center;">10</div>
<div class="t" style="left:0.5px;top:714.5px;font-size:19px;line-height:27px;color:#444444;width:24px;text-align:center;">11</div>
<div class="t" style="left:0.5px;top:750.5px;font-size:19px;line-height:27px;color:#444444;width:24px;text-align:center;">12</div>
<div class="t" style="left:0.5px;top:786.5px;font-size:19px;line-height:27px;color:#444444;width:24px;text-align:center;">13</div>
<div class="t" style="left:0.5px;top:822.5px;font-size:19px;line-height:27px;color:#444444;width:24px;text-align:center;">14</div>
<div class="t" style="left:0.5px;top:858.5px;font-size:19px;line-height:27px;color:#444444;width:24px;text-align:center;">15</div>
<div class="t" style="left:0.5px;top:894.5px;font-size:19px;line-height:27px;color:#444444;width:24px;text-align:center;">16</div>
<div class="t" style="left:0.5px;top:930.5px;font-size:19px;line-height:27px;color:#444444;width:24px;text-align:center;">17</div>
<div class="t" style="left:0.5px;top:966.5px;font-size:19px;line-height:27px;color:#444444;width:24px;text-align:center;">18</div>
</body></html>
